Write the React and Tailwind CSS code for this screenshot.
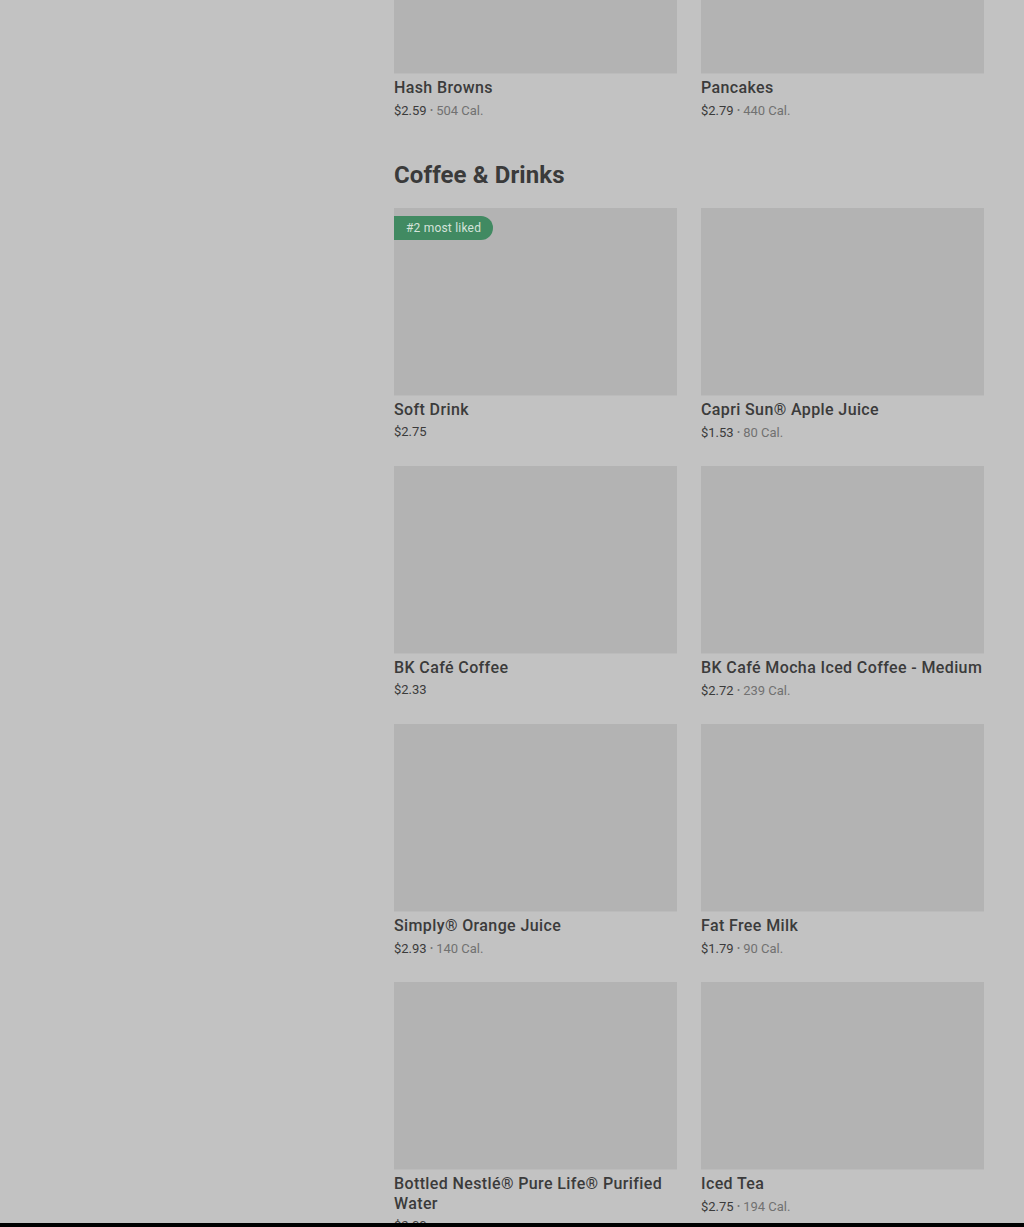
import React from "react";

const topRow = [
  { name: "Hash Browns", price: "$2.59", cal: "504 Cal." },
  { name: "Pancakes", price: "$2.79", cal: "440 Cal." },
];

const drinks = [
  { name: "Soft Drink", price: "$2.75", badge: "#2 most liked" },
  { name: "Capri Sun® Apple Juice", price: "$1.53", cal: "80 Cal." },
  { name: "BK Café Coffee", price: "$2.33" },
  { name: "BK Café Mocha Iced Coffee - Medium", price: "$2.72", cal: "239 Cal." },
  { name: "Simply® Orange Juice", price: "$2.93", cal: "140 Cal." },
  { name: "Fat Free Milk", price: "$1.79", cal: "90 Cal." },
  { name: "Bottled Nestlé® Pure Life® Purified Water", price: "$2.00" },
  { name: "Iced Tea", price: "$2.75", cal: "194 Cal." },
];

const ItemCard = ({ item }) => {
  return (
    <div className="flex flex-col">
      <div className="relative h-[188px] w-full bg-[#b3b3b3] border-b border-[#bbbbbb]">
        {item.badge && (
          <span className="absolute left-0 top-2 h-6 pl-3 pr-3 flex items-center bg-[#418a62] text-[#d4e3da] text-[12px] tracking-[0.2px] rounded-r-full">
            {item.badge}
          </span>
        )}
      </div>
      <div className="mt-[4px] text-[16px] leading-5 font-medium tracking-[0.38px] text-[#3b3b3b]">
        {item.name}
      </div>
      <div className="mt-[3px] h-[18px] text-[13px] leading-[18px] text-[#3b3b3b]">
        {item.price}
        {item.cal && (
          <span className="text-[#717171]">
            {" "}
            <span className="text-[9px] align-[2px]">•</span> {item.cal}
          </span>
        )}
      </div>
    </div>
  );
};

export default function App() {
  return (
    <div className="h-[1227px] overflow-hidden bg-[#c2c2c2] flex flex-col font-['Roboto',sans-serif]">
      <div className="flex-1 overflow-hidden">
        <div className="ml-[394px] mr-[40px] -mt-[114px]">
          <div className="grid grid-cols-2 gap-x-6">
            {topRow.map((item) => (
              <ItemCard key={item.name} item={item} />
            ))}
          </div>
          <h2 className="mt-[40px] text-[24px] leading-8 font-bold tracking-[0.1px] text-[#3a3a3a]">
            Coffee &amp; Drinks
          </h2>
          <div className="mt-[17px] grid grid-cols-2 gap-x-6 gap-y-[25px]">
            {drinks.map((item) => (
              <ItemCard key={item.name} item={item} />
            ))}
          </div>
        </div>
      </div>
      <div className="h-1 bg-black" />
    </div>
  );
}
